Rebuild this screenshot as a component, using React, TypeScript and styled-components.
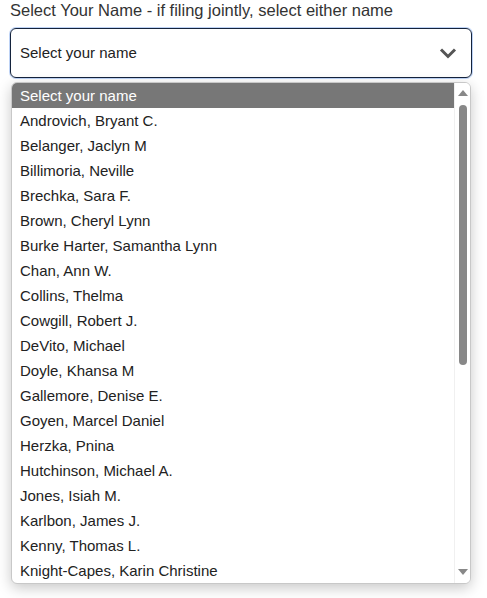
import styled, { createGlobalStyle } from "styled-components";

const names = [
	"Androvich, Bryant C.",
	"Belanger, Jaclyn M",
	"Billimoria, Neville",
	"Brechka, Sara F.",
	"Brown, Cheryl Lynn",
	"Burke Harter, Samantha Lynn",
	"Chan, Ann W.",
	"Collins, Thelma",
	"Cowgill, Robert J.",
	"DeVito, Michael",
	"Doyle, Khansa M",
	"Gallemore, Denise E.",
	"Goyen, Marcel Daniel",
	"Herzka, Pnina",
	"Hutchinson, Michael A.",
	"Jones, Isiah M.",
	"Karlbon, James J.",
	"Kenny, Thomas L.",
	"Knight-Capes, Karin Christine",
];

const GlobalStyle = createGlobalStyle`
	body {
		margin: 0;
		background: #fff;
		font-family: "Liberation Sans", Arial, sans-serif;
	}
`;

const Page = styled.div`
	width: 487px;
	height: 598px;
	padding: 0 15px 0 10px;
	box-sizing: border-box;
	overflow: hidden;
`;

const Label = styled.div`
	font-size: 16.5px;
	line-height: 20px;
	color: #333;
	margin-bottom: 8px;
`;

const SelectBox = styled.div`
	height: 50px;
	box-sizing: border-box;
	border: 1px solid #14233d;
	border-radius: 6px;
	box-shadow: 0 0 0 1px rgba(70, 130, 230, 0.35);
	display: flex;
	align-items: center;
	justify-content: space-between;
	padding: 0 14px 1px 9px;
	font-size: 15px;
	color: #222;
`;

const Popup = styled.div`
	margin: 4px 1px 0 1px;
	height: 500px;
	border: 1px solid #c8c8c8;
	border-radius: 6px;
	box-shadow: 0 4px 14px rgba(0, 0, 0, 0.22);
	display: flex;
	overflow: hidden;
	background: #fff;
`;

const Options = styled.div`
	flex: 1;
	display: flex;
	flex-direction: column;
`;

const Option = styled.div<{ $active?: boolean }>`
	height: 25px;
	line-height: 25px;
	flex: none;
	padding-left: 8px;
	font-size: 15px;
	color: ${(p) => (p.$active ? "#fff" : "#222")};
	background: ${(p) => (p.$active ? "#777" : "transparent")};
`;

const Scrollbar = styled.div`
	width: 15px;
	display: flex;
	flex-direction: column;
	align-items: center;
	background: #fff;
	border-left: 1px solid #f0f0f0;
`;

const Arrow = styled.div<{ $down?: boolean }>`
	width: 0;
	height: 0;
	margin: ${(p) => (p.$down ? "6px 0 8px" : "7px 0 9px")};
	border-left: 5px solid transparent;
	border-right: 5px solid transparent;
	${(p) =>
		p.$down ? "border-top: 6px solid #888;" : "border-bottom: 6px solid #888;"}
`;

const Track = styled.div`
	flex: 1;
	width: 8px;
	display: flex;
	flex-direction: column;
`;

const Thumb = styled.div`
	height: 260px;
	border-radius: 4px;
	background: #888;
`;

function Chevron() {
	return (
		<svg width="18" height="12" viewBox="0 0 18 12">
			<path d="M2 2.5 L9 9.5 L16 2.5" fill="none" stroke="#555" strokeWidth="3" />
		</svg>
	);
}

export default function App() {
	return (
		<>
			<GlobalStyle />
			<Page>
				<Label>Select Your Name - if filing jointly, select either name</Label>
				<SelectBox>
					<span>Select your name</span>
					<Chevron />
				</SelectBox>
				<Popup>
					<Options>
						<Option $active>Select your name</Option>
						{names.map((n) => (
							<Option key={n}>{n}</Option>
						))}
					</Options>
					<Scrollbar>
						<Arrow />
						<Track>
							<Thumb />
						</Track>
						<Arrow $down />
					</Scrollbar>
				</Popup>
			</Page>
		</>
	);
}
